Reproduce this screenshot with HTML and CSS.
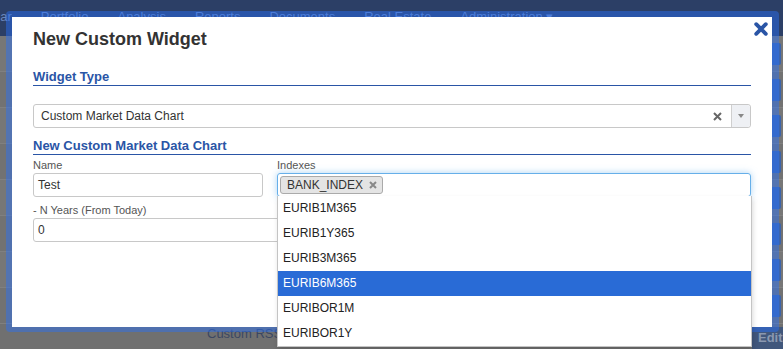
FILE: index.html
```html
<!DOCTYPE html>
<html lang="en">
<head>
  <meta charset="UTF-8">
  <title>New Custom Widget</title>
  <link rel="stylesheet" href="styles.css">
</head>
<body>

<!-- Page behind the dialog -->
<div class="page">
  <div class="navbar">
    <span>Calendar</span>
    <span>Portfolio</span>
    <span>Analysis</span>
    <span>Reports</span>
    <span>Documents</span>
    <span>Real Estate</span>
    <span>Administration &#9662;</span>
  </div>
  <div class="rows">
    <div class="row"><span class="btn blue"></span><span class="btn red"></span></div>
    <div class="row"><span class="btn blue"></span><span class="btn red"></span></div>
    <div class="row"><span class="btn blue"></span><span class="btn red"></span></div>
    <div class="row"><span class="btn blue"></span><span class="btn red"></span></div>
    <div class="row"><span class="btn blue"></span><span class="btn red"></span></div>
    <div class="row"><span class="btn blue"></span><span class="btn red"></span></div>
    <div class="row"><span class="btn blue"></span><span class="btn red"></span></div>
    <div class="row"><span class="btn blue"></span><span class="btn red"></span></div>
  </div>
  <div class="footer-row">
    <span>Custom RSS Feed</span>
    <span class="edit-btn">Edit</span>
  </div>
</div>

<!-- Dialog -->
<div class="modal">
  <a class="modal-close" href="#">
    <svg width="14" height="14" viewBox="0 0 14 14">
      <path d="M2.2 2.2 L11.8 11.8 M11.8 2.2 L2.2 11.8" stroke="#2a55a6" stroke-width="3.8" stroke-linecap="round"/>
    </svg>
  </a>

  <div class="modal-body">
    <h2>New Custom Widget</h2>

    <div class="section-title">Widget Type</div>
    <div class="select">
      <span class="select-value">Custom Market Data Chart</span>
      <span class="select-clear">
        <svg width="9" height="9" viewBox="0 0 9 9">
          <path d="M1 1 L8 8 M8 1 L1 8" stroke="#666" stroke-width="2"/>
        </svg>
      </span>
      <span class="select-arrow"><b></b></span>
    </div>

    <div class="section-title second">New Custom Market Data Chart</div>
    <div class="fields">
      <div class="field">
        <label>Name</label>
        <div class="input">Test</div>
      </div>
      <div class="field indexes">
        <label>Indexes</label>
        <div class="input tags">
          <span class="tag">BANK_INDEX
            <svg width="8" height="8" viewBox="0 0 8 8">
              <path d="M1 1 L7 7 M7 1 L1 7" stroke="#888" stroke-width="2"/>
            </svg>
          </span>
        </div>
        <ul class="dropdown">
          <li>EURIB1M365</li>
          <li>EURIB1Y365</li>
          <li>EURIB3M365</li>
          <li class="active">EURIB6M365</li>
          <li>EURIBOR1M</li>
          <li>EURIBOR1Y</li>
        </ul>
      </div>
      <div class="field years">
        <label>- N Years (From Today)</label>
        <div class="input">0</div>
      </div>
    </div>
  </div>
</div>

</body>
</html>
```

FILE: styles.css
```css
* {
  box-sizing: border-box;
}
html, body {
  margin: 0;
  padding: 0;
}
body {
  position: relative;
  width: 783px;
  height: 349px;
  overflow: hidden;
  font-family: "Liberation Sans", Arial, sans-serif;
  background: #707070;
}

/* page behind the overlay (already dimmed) */
.navbar {
  height: 36px;
  background: #2c3f66;
  display: flex;
  gap: 29px;
  margin-left: -41px;
  padding-top: 9px;
  font-size: 13px;
  line-height: 16px;
  color: #6a86bd;
  white-space: nowrap;
}
.row {
  height: 36px;
  border-bottom: 1px solid #808080;
  background: #777;
  display: flex;
  justify-content: flex-end;
  align-items: center;
  gap: 2px;
  margin-right: -30px;
}
.row:nth-child(even) {
  background: #727272;
}
.btn {
  width: 44px;
  height: 22px;
  border-radius: 2px;
}
.btn.blue {
  background: #3c64aa;
}
.btn.red {
  width: 30px;
  background: #8e3a3a;
}
.footer-row {
  display: flex;
  padding: 2px 0 0 207px;
  font-size: 13px;
  line-height: 16px;
  color: #3b4763;
}
.edit-btn {
  margin-left: auto;
  margin-right: -10px;
  margin-top: 1px;
  width: 41px;
  height: 22px;
  padding-left: 6px;
  font-weight: bold;
  line-height: 22px;
  color: #8a98b0;
  background: #41577c;
}

/* dialog */
.modal {
  position: absolute;
  left: 6px;
  top: 11px;
  width: 773px;
  height: 321px;
  border-style: solid;
  border-width: 6px 7px 5px 6px;
  border-color: rgba(40, 112, 250, 0.45);
  border-radius: 4px;
  background: #fff;
  background-clip: padding-box;
}
.modal-close {
  position: absolute;
  top: 5px;
  right: 4px;
  display: block;
  width: 14px;
  height: 14px;
}
.modal-close svg {
  display: block;
}
.modal-body {
  padding: 12px 21px 0;
  color: #333;
}
.modal-body h2 {
  margin: 0;
  font-size: 18px;
  line-height: 20px;
  font-weight: bold;
  color: #333;
}
.section-title {
  margin-top: 20px;
  font-size: 13px;
  line-height: 16px;
  font-weight: bold;
  color: #2a55a6;
  border-bottom: 1px solid #2a55a6;
}
.section-title.second {
  margin-top: 10px;
}

.select {
  margin-top: 18px;
  height: 24px;
  display: flex;
  align-items: center;
  border: 1px solid #c8c8c8;
  border-radius: 3px;
  font-size: 12px;
}
.select-value {
  flex: 1;
  padding-left: 7px;
  color: #333;
}
.select-clear {
  width: 9px;
  height: 9px;
  margin-right: 9px;
}
.select-clear svg {
  display: block;
}
.select-arrow {
  width: 19px;
  height: 22px;
  background: #eef0f4;
  border-left: 1px solid #cfcfcf;
  border-radius: 0 3px 3px 0;
  display: flex;
  align-items: center;
  justify-content: center;
}
.select-arrow b {
  width: 0;
  height: 0;
  border-left: 3.5px solid transparent;
  border-right: 3.5px solid transparent;
  border-top: 4px solid #888;
}

.fields {
  margin-top: 3px;
  display: grid;
  grid-template-columns: 230px 1fr;
  column-gap: 14px;
  row-gap: 6px;
}
.field label {
  display: block;
  margin-bottom: 1px;
  font-size: 11px;
  line-height: 14px;
  color: #555;
}
.input {
  height: 24px;
  padding-left: 4px;
  border: 1px solid #c8c8c8;
  border-radius: 3px;
  font-size: 12px;
  line-height: 22px;
  color: #333;
}
.indexes {
  position: relative;
  z-index: 2;
}
.input.tags {
  padding-left: 2px;
  padding-top: 2px;
  border-color: #66afe9;
  box-shadow: 0 0 7px rgba(102, 175, 233, 0.55);
}
.tag {
  display: inline-flex;
  align-items: center;
  gap: 6px;
  height: 18px;
  padding: 0 5px 0 6px;
  border: 1px solid #aaa;
  border-radius: 3px;
  background: #e4e4e4;
  font-size: 12px;
  line-height: 16px;
  color: #333;
  vertical-align: top;
}
.tag svg {
  display: block;
}
.years {
  grid-column: 1 / -1;
}

.dropdown {
  position: absolute;
  top: calc(100% - 1px);
  left: 0;
  right: -1px;
  margin: 0;
  padding: 0;
  list-style: none;
  background: #fff;
  border: 1px solid #c4c4c4;
  border-top: none;
  box-shadow: 1px 3px 5px rgba(0, 0, 0, 0.15);
}
.dropdown li {
  height: 25px;
  padding-left: 5px;
  font-size: 12px;
  line-height: 25px;
  color: #222;
}
.dropdown li.active {
  background: #296bd6;
  color: #fff;
}
```
